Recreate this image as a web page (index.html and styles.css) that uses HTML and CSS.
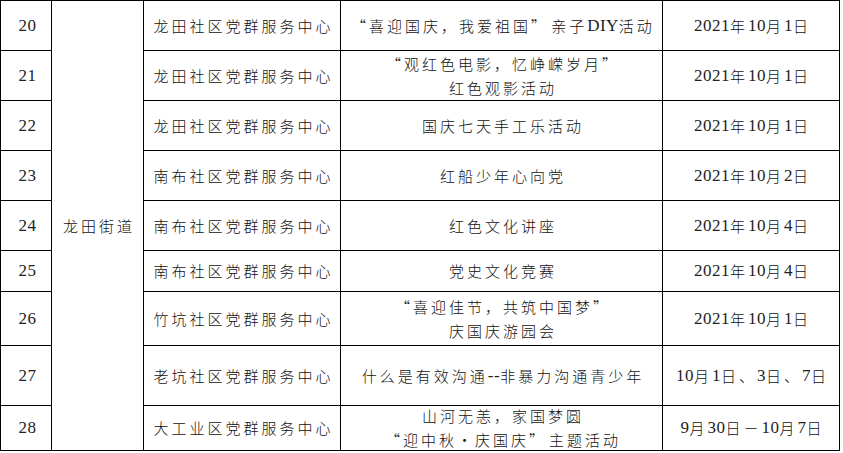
FILE: index.html
```html
<!DOCTYPE html>
<html lang="zh-CN">
<head>
<meta charset="utf-8">
<link rel="stylesheet" href="styles.css">
</head>
<body>
<div class="table">
  <div class="cell num"><span class="n">20</span></div>
  <div class="cell street">龙田街道</div>
  <div class="cell">龙田社区党群服务中心</div>
  <div class="cell">“喜迎国庆，我爱祖国”<span class="sp"></span>亲子<span class="n">DIY</span>活动</div>
  <div class="cell"><span class="n">2021</span>年<span class="n">10</span>月<span class="n">1</span>日</div>

  <div class="cell num"><span class="n">21</span></div>
  <div class="cell">龙田社区党群服务中心</div>
  <div class="cell"><div>“观红色电影，忆峥嵘岁月”<br>红色观影活动</div></div>
  <div class="cell"><span class="n">2021</span>年<span class="n">10</span>月<span class="n">1</span>日</div>

  <div class="cell num"><span class="n">22</span></div>
  <div class="cell">龙田社区党群服务中心</div>
  <div class="cell">国庆七天手工乐活动</div>
  <div class="cell"><span class="n">2021</span>年<span class="n">10</span>月<span class="n">1</span>日</div>

  <div class="cell num"><span class="n">23</span></div>
  <div class="cell">南布社区党群服务中心</div>
  <div class="cell">红船少年心向党</div>
  <div class="cell"><span class="n">2021</span>年<span class="n">10</span>月<span class="n">2</span>日</div>

  <div class="cell num"><span class="n">24</span></div>
  <div class="cell">南布社区党群服务中心</div>
  <div class="cell">红色文化讲座</div>
  <div class="cell"><span class="n">2021</span>年<span class="n">10</span>月<span class="n">4</span>日</div>

  <div class="cell num"><span class="n">25</span></div>
  <div class="cell">南布社区党群服务中心</div>
  <div class="cell">党史文化竞赛</div>
  <div class="cell"><span class="n">2021</span>年<span class="n">10</span>月<span class="n">4</span>日</div>

  <div class="cell num"><span class="n">26</span></div>
  <div class="cell">竹坑社区党群服务中心</div>
  <div class="cell"><div>“喜迎佳节，共筑中国梦”<br>庆国庆游园会</div></div>
  <div class="cell"><span class="n">2021</span>年<span class="n">10</span>月<span class="n">1</span>日</div>

  <div class="cell num"><span class="n">27</span></div>
  <div class="cell">老坑社区党群服务中心</div>
  <div class="cell">什么是有效沟通<span class="n">--</span>非暴力沟通青少年</div>
  <div class="cell"><span class="n">10</span>月<span class="n">1</span>日、<span class="n">3</span>日、<span class="n">7</span>日</div>

  <div class="cell num"><span class="n">28</span></div>
  <div class="cell">大工业区党群服务中心</div>
  <div class="cell"><div>山河无恙，家国梦圆<br>“迎中秋·庆国庆”<span class="sp"></span>主题活动</div></div>
  <div class="cell"><span class="n">9</span>月<span class="n">30</span>日－<span class="n">10</span>月<span class="n">7</span>日</div>
</div>
</body>
</html>
```

FILE: styles.css
```css
html, body {
  margin: 0;
  padding: 0;
  background: #ffffff;
}

.table {
  display: grid;
  width: 838px;
  grid-template-columns: 50px 91px 196px 321px 176px;
  grid-template-rows: 49px 49px 49px 49px 49px 40px 53px 59px 44px;
  gap: 1px;
  padding: 1px;
  background: #000000;
  font-family: "Noto Sans CJK SC", sans-serif;
  font-weight: 300;
  font-size: 15px;
  line-height: 24px;
  color: #111111;
  letter-spacing: 3px;
}

.cell {
  background: #ffffff;
  display: flex;
  align-items: center;
  justify-content: center;
  text-align: center;
  padding-left: 3px;
  white-space: nowrap;
}

.street {
  grid-column: 2;
  grid-row: 1 / span 9;
}

.n {
  font-family: "Liberation Serif", serif;
  font-weight: 400;
  font-size: 17px;
  letter-spacing: 0.5px;
  color: #222222;
}

.sp {
  display: inline-block;
  width: 2px;
}
```
